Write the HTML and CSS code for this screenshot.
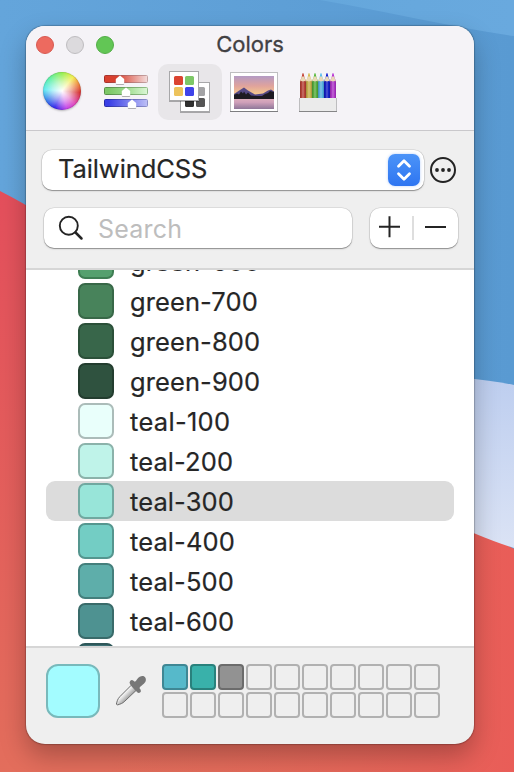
FILE: index.html
```
<!DOCTYPE html>
<html lang="en">
<head>
<meta charset="utf-8">
<title>Colors</title>
<link rel="stylesheet" href="styles.css">
</head>
<body>
<svg class="wallpaper" viewBox="0 0 514 772" aria-hidden="true">
  <defs>
    <linearGradient id="skyTop" x1="0" y1="0" x2="1" y2="0"><stop offset="0" stop-color="#65a7dc"/><stop offset="1" stop-color="#69a9de"/></linearGradient>
    <linearGradient id="skyRight" x1="0" y1="0" x2="1" y2="0"><stop offset="0" stop-color="#64a5db"/><stop offset="1" stop-color="#599ad2"/></linearGradient>
    <linearGradient id="redLeft" x1="0" y1="190" x2="0" y2="772" gradientUnits="userSpaceOnUse"><stop offset="0" stop-color="#e44f5c"/><stop offset="1" stop-color="#e36e5c"/></linearGradient>
    <linearGradient id="redRight" x1="100" y1="0" x2="514" y2="0" gradientUnits="userSpaceOnUse"><stop offset="0" stop-color="#e66a59" stop-opacity="0"/><stop offset="1" stop-color="#e95d58"/></linearGradient>
    <linearGradient id="mist" x1="0" y1="0" x2="0" y2="1"><stop offset="0" stop-color="#bccdef"/><stop offset="1" stop-color="#dbe3f5"/></linearGradient>
  </defs>
  <rect width="514" height="772" fill="url(#skyRight)"/>
  <path d="M320 0C390 12 450 27 514 36V0Z" fill="url(#skyTop)"/>
  <path d="M0 191C120 250 280 430 514 549V772H0Z" fill="url(#redLeft)"/>
  <path d="M0 191C120 250 280 430 514 549V772H0Z" fill="url(#redRight)"/>
  <path d="M380 370Q474 377 514 385V548Q474 536 380 490Z" fill="url(#mist)"/>
</svg>

<main class="window">
  <header class="header">
    <div class="titlebar">
      <div class="lights"><i class="light red"></i><i class="light gray"></i><i class="light green"></i></div>
      <h1 class="title">Colors</h1>
    </div>
    <nav class="tabs">
      <div class="tab"><i class="wheel"></i></div>
      <div class="tab">
        <svg width="48" height="40" viewBox="0 0 48 40">
          <defs>
            <linearGradient id="r"><stop offset=".3" stop-color="#d8402f"/><stop offset="1" stop-color="#f3dcdc"/></linearGradient>
            <linearGradient id="g"><stop offset=".1" stop-color="#7dc767"/><stop offset=".5" stop-color="#9cdb8c"/><stop offset="1" stop-color="#dcf7d6"/></linearGradient>
            <linearGradient id="b"><stop offset=".1" stop-color="#3a3fe6"/><stop offset="1" stop-color="#bdbff6"/></linearGradient>
            <linearGradient id="re"><stop offset="0" stop-color="#a52c26"/><stop offset="1" stop-color="#c4a4a4"/></linearGradient>
            <linearGradient id="ge"><stop offset="0" stop-color="#548d45"/><stop offset="1" stop-color="#92bd88"/></linearGradient>
            <linearGradient id="be"><stop offset="0" stop-color="#2529a8"/><stop offset="1" stop-color="#8d90c9"/></linearGradient>
            <filter id="sh" x="-50%" y="-50%" width="200%" height="200%"><feDropShadow dx="0" dy=".7" stdDeviation=".7" flood-opacity=".4"/></filter>
          </defs>
          <rect x="2.500" y="3.500" width="43" height="7" rx="1" fill="url(#r)" stroke="url(#re)"/>
          <rect x="2.500" y="15.500" width="43" height="7" rx="1" fill="url(#g)" stroke="url(#ge)"/>
          <rect x="2.500" y="27.500" width="43" height="7" rx="1" fill="url(#b)" stroke="url(#be)"/>
          <g fill="#fff" filter="url(#sh)">
            <path d="M18 3.500l4.200 3.500v4q0 1-1 1h-6.400q-1 0-1-1v-4z"/>
            <path d="M24 15.500l4.200 3.500v4q0 1-1 1h-6.400q-1 0-1-1v-4z"/>
            <path d="M30 27.500l4.200 3.500v4q0 1-1 1h-6.400q-1 0-1-1v-4z"/>
          </g>
        </svg>
      </div>
      <div class="tab selected">
        <svg class="swatches" width="46" height="46" viewBox="0 0 46 46">
          <g filter="url(#sh)"><rect x="13.500" y="14.500" width="29" height="29" fill="#fff" stroke="#a7a7a9"/></g>
          <rect x="18" y="30" width="9" height="9" rx="1.500" fill="#303030"/><rect x="29" y="30" width="9" height="9" rx="1.500" fill="#555"/>
          <rect x="29" y="19" width="9" height="9" rx="1.500" fill="#a3a3a5"/>
          <g filter="url(#sh)"><rect x="2.500" y="3.500" width="29" height="29" fill="#fff" stroke="#a7a7a9"/></g>
          <rect x="7" y="8" width="9" height="9" rx="1.500" fill="#db4431"/><rect x="18" y="8" width="9" height="9" rx="1.500" fill="#7dc767"/>
          <rect x="7" y="19" width="9" height="9" rx="1.500" fill="#edc35c"/><rect x="18" y="19" width="9" height="9" rx="1.500" fill="#3f43e9"/>
        </svg>
      </div>
      <div class="tab">
        <svg class="photo" width="48" height="42" viewBox="0 0 48 42">
          <defs>
            <linearGradient id="dusk" x2="0" y2="1"><stop offset="0" stop-color="#b39ac4"/><stop offset=".5" stop-color="#e0a39c"/><stop offset="1" stop-color="#fad18a"/></linearGradient>
            <linearGradient id="lake" x2="0" y2="1"><stop offset="0" stop-color="#dfb0bd"/><stop offset=".4" stop-color="#cfa0b9"/><stop offset="1" stop-color="#8e7799"/></linearGradient>
          </defs>
          <rect x=".5" y="1.500" width="47" height="39" fill="#fff" stroke="#bebec0"/>
          <path d="M0 40.500H48" stroke="#7d7d80"/>
          <path fill="url(#dusk)" d="M4 5h40v20H4z"/>
          <path fill="url(#lake)" d="M4 27h40v11H4z"/>
          <path fill="#544884" d="M4 23L10 19l4-2.500 4 3 7 4 8-1 5-3 3-1 3 2v7H4z"/>
          <path fill="#1d1a21" d="M4 24l3-1.500 2 1 2-3 2 2 1-2 2 3 2-2 3 3 6 .5 5 0 3-2 3-1 2-2 4 1v7H4z"/>
        </svg>
      </div>
      <div class="tab">
        <svg width="38" height="42" viewBox="0 0 38 42">
          <defs>
            <linearGradient id="round"><stop offset="0" stop-opacity=".3"/><stop offset=".2" stop-opacity=".08"/><stop offset=".5" stop-color="#fff" stop-opacity=".35"/><stop offset=".8" stop-opacity=".03"/><stop offset="1" stop-opacity=".3"/></linearGradient>
            <g id="pencil"><path d="M0 10L1.500 7 2.300 3q.7-2 1.400 0l.9 4 1.400 3v17H0z"/><path d="M0 10.500L2 5.500h2l2 5q-1.500-1-3 0-1.500-1-3 0z" fill="#ead9b6"/><path d="M0 10h6v17H0z" fill="url(#round)"/></g>
          </defs>
          <use href="#pencil" x="1" fill="#c5453a"/><use href="#pencil" x="7" fill="#d6bd50"/><use href="#pencil" x="13" fill="#5aba40"/>
          <use href="#pencil" x="19" fill="#5bbdf0"/><use href="#pencil" x="25" fill="#1420d4"/><use href="#pencil" x="31" fill="#b936d6"/>
          <path d="M.5 27v13.500h37V27" fill="#ebebeb" stroke="#bdbdbf"/><path d="M0 40.500h38" stroke="#858587"/>
        </svg>
      </div>
    </nav>
  </header>

  <section class="controls">
    <div class="control-row">
      <div class="select"><span class="select-text">TailwindCSS</span>
        <span class="stepper"><svg width="32" height="32" viewBox="0 0 32 32"><path d="M10.500 12.200L16 6.700l5.500 5.500M10.500 19.800l5.500 5.500 5.500-5.500" fill="none" stroke="#fff" stroke-width="2.800" stroke-linecap="round" stroke-linejoin="round"/></svg></span>
      </div>
      <svg class="more" width="26" height="26" viewBox="0 0 26 26"><circle cx="13" cy="13" r="12" fill="none" stroke="#232323" stroke-width="2"/><g fill="#232323"><circle cx="7" cy="13" r="1.900"/><circle cx="13" cy="13" r="1.900"/><circle cx="19" cy="13" r="1.900"/></g></svg>
    </div>
    <div class="control-row second">
      <div class="search">
        <svg width="26" height="26" viewBox="0 0 26 26" fill="none" stroke="#242424"><circle cx="10.800" cy="10.800" r="9" stroke-width="1.900"/><path d="M17.500 17.500l6 6" stroke-width="2.500" stroke-linecap="round"/></svg>
        <span class="placeholder">Search</span>
      </div>
      <div class="segments"><svg width="88" height="40" viewBox="0 0 88 40"><path d="M9 18.800h21M19.500 8.300v21M55 19h21" stroke="#242424" stroke-width="2"/><path d="M43 8v24" stroke="#dedede" stroke-width="2"/></svg></div>
    </div>
  </section>

  <section class="list">
    <ul class="rows">
      <li class="row"><i class="swatch g600"></i><span>green-600</span></li>
      <li class="row"><i class="swatch g700"></i><span>green-700</span></li>
      <li class="row"><i class="swatch g800"></i><span>green-800</span></li>
      <li class="row"><i class="swatch g900"></i><span>green-900</span></li>
      <li class="row"><i class="swatch t100"></i><span class="wide">teal-100</span></li>
      <li class="row"><i class="swatch t200"></i><span>teal-200</span></li>
      <li class="row current"><i class="swatch t300"></i><span>teal-300</span></li>
      <li class="row"><i class="swatch t400"></i><span>teal-400</span></li>
      <li class="row"><i class="swatch t500"></i><span>teal-500</span></li>
      <li class="row"><i class="swatch t600"></i><span>teal-600</span></li>
      <li class="row"><i class="swatch t700"></i></li>
    </ul>
  </section>

  <footer class="footer">
    <div class="well"></div>
    <svg class="dropper" width="34" height="34" viewBox="0 0 34 34">
      <defs><linearGradient id="glass" x1="9" y1="18" x2="16" y2="25" gradientUnits="userSpaceOnUse"><stop offset="0" stop-color="#bbb"/><stop offset=".3" stop-color="#f8f8f8"/><stop offset=".55" stop-color="#d8d8d8"/><stop offset="1" stop-color="#999"/></linearGradient></defs>
      <path d="M18.200 12.300L7 23.500c-2.500 2.500-3 5-3.600 7.500.3.800.8 1 1.500.8 2.500-.8 4.500-1.200 7-3.700L23 17.500z" fill="url(#glass)" stroke="#6c6c6c"/>
      <path d="M17.300 7.800q1.500-1.600 3.200 0l1.300 1q1-.3 2.300-2.500c2.800-4 7-4.300 8.300-1.500 1.400 3-.4 5.500-3.600 7.700q-2.500 1.600-2.300 2.800l1 1.200q1.200 1.800-.4 3.100-1.600 1-2.900-.3l-7-7.900q-1.400-2 .1-3.600z" fill="#777"/>
    </svg>
    <div class="palette">
      <i class="cell blue"></i><i class="cell teal"></i><i class="cell dim"></i><i class="cell"></i><i class="cell"></i><i class="cell"></i><i class="cell"></i><i class="cell"></i><i class="cell"></i><i class="cell"></i>
      <i class="cell"></i><i class="cell"></i><i class="cell"></i><i class="cell"></i><i class="cell"></i><i class="cell"></i><i class="cell"></i><i class="cell"></i><i class="cell"></i><i class="cell"></i>
    </div>
  </footer>
</main>
</body>
</html>
```
FILE: styles.css
```
* { box-sizing: border-box; }
body { margin: 0; width: 514px; height: 772px; padding: 26px; overflow: hidden; font-family: Inter, "Liberation Sans", sans-serif; color: #262626; }
svg { display: block; flex: none; }
.wallpaper { position: absolute; inset: 0; width: 514px; height: 772px; z-index: -1; }
.window { width: 448px; height: 718px; display: flex; flex-direction: column; border-radius: 19px; overflow: hidden; background: #efefef; box-shadow: 0 0 1px 1px rgba(0,0,0,.2), 0 12px 26px rgba(0,0,0,.26); }
.header { height: 105px; background: #f5f3f7; border-bottom: 1px solid #c9c8cb; }
.titlebar { height: 38px; display: grid; grid-template-columns: 112px 1fr 112px; align-items: center; }
.lights { display: flex; gap: 12px; padding-left: 10px; }
.light { width: 18px; height: 18px; border-radius: 50%; border: 1px solid; }
.red { background: #ed6a5f; border-color: #d75951; }
.gray { background: #dcdadd; border-color: #bebcbf; }
.green { background: #62c655; border-color: #53ad47; }
.title { margin: -2px 0 0; text-align: center; font-size: 22px; line-height: 36px; font-weight: 400; letter-spacing: 0; color: #414043; -webkit-text-stroke: .3px #414043; }
.tabs { display: flex; padding-left: 4px; }
.tab { width: 64px; height: 56px; display: flex; align-items: center; justify-content: center; border-radius: 10px; }
.selected { background: #e8e6e9; }
.swatches { margin-top: -2px; }
.photo { margin-top: -1px; }
.wheel { width: 38px; height: 38px; border-radius: 50%; margin-top: -2px; background: radial-gradient(circle, #fff 0, rgba(255,255,255,.55) 35%, transparent 70%), conic-gradient(from 0deg, #8fee4a, #f1ed47 38deg, #ee8a38 65deg, #d32829 95deg, #dd42b8 135deg, #c23ce8 165deg, #2d1eea 203deg, #327ce9 240deg, #58e9f0 275deg, #56eea1 315deg, #8fee4a); box-shadow: inset 0 0 1px rgba(0,0,0,.6), 0 1px 2px rgba(0,0,0,.25); }
.controls { height: 139px; padding: 19px 16px 0; border-bottom: 2px solid #d6d6d6; }
.control-row { display: flex; align-items: center; }
.second { margin-top: 18px; padding-left: 2px; }
.select, .search, .segments { height: 40px; background: #fff; border-radius: 10px; box-shadow: 0 0 0 .5px rgba(0,0,0,.14), 0 1px 1px rgba(0,0,0,.3), 0 1px 3px rgba(0,0,0,.08); }
.select { width: 382px; display: flex; align-items: center; justify-content: space-between; padding: 0 4px 0 16px; }
.select-text { font-size: 25.5px; line-height: 38px; margin-top: -2px; letter-spacing: -.1px; -webkit-text-stroke: .2px #262626; }
.stepper { border-radius: 7px; background: linear-gradient(#4c94f8, #2e75f1); box-shadow: 0 0 3px rgba(50,120,240,.35); }
.more { margin-left: 6px; }
.search { width: 308px; display: flex; align-items: center; padding-left: 14px; }
.placeholder { margin-left: 14px; font-size: 25px; color: #bdbdbd; margin-top: 2px; letter-spacing: .2px; }
.segments { width: 88px; margin-left: 18px; }
.list { height: 376px; overflow: hidden; background: #fff; }
.rows { list-style: none; margin: -29px 0 0; padding: 0 20px; }
.row { height: 40px; padding-left: 32px; display: flex; align-items: center; gap: 16px; border-radius: 9px; font-size: 25.5px; line-height: 40px; letter-spacing: .1px; -webkit-text-stroke: .2px #262626; }
.row span { padding-top: 2px; line-height: 38px; }
.row .wide { letter-spacing: .3px; }
.current { background: #dcdcdc; }
.swatch { width: 36px; height: 36px; border: 2px solid; border-radius: 7px; flex: none; }
.g600 { background: #55a06e; border-color: #3e7e53; }
.g700 { background: #48835b; border-color: #386848; }
.g800 { background: #38664a; border-color: #2b5039; }
.g900 { background: #2f523f; border-color: #233d2f; }
.t100 { background: #e9fffb; border-color: #abbcb9; }
.t200 { background: #bff3e9; border-color: #8bb2aa; }
.t300 { background: #98e5d9; border-color: #70a8a0; }
.t400 { background: #73cdc4; border-color: #55968f; }
.t500 { background: #5eaeaa; border-color: #447f7c; }
.t600 { background: #4e9291; border-color: #396b6a; }
.t700 { background: #3d7175; border-color: #2e5759; }
.footer { flex: 1; border-top: 2px solid #d6d6d6; padding: 16px 20px 0; display: flex; align-items: flex-start; }
.well { width: 54px; height: 54px; border-radius: 12px; background: #a3fcff; border: 2px solid #78b9bb; }
.dropper { margin: 9px 0 0 13px; }
.palette { display: grid; grid-template-columns: repeat(10, 26px); gap: 2px; margin-left: 15px; }
.cell { width: 26px; height: 26px; border: 2px solid #b1b1b1; border-radius: 4px; }
.blue { background: #56b9ca; border-color: #3f8794; }
.teal { background: #39b1aa; border-color: #29817c; }
.dim { background: #929292; border-color: #6b6b6b; }
```
